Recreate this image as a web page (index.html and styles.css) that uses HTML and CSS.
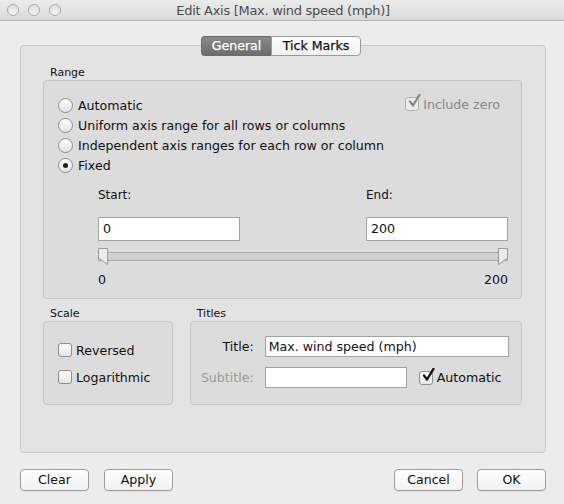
FILE: index.html
```html
<!DOCTYPE html>
<html>
<head>
<meta charset="utf-8">
<link rel="stylesheet" href="styles.css">
</head>
<body>
<div class="window">
  <div class="titlebar">
    <div class="lights"><span class="light"></span><span class="light"></span><span class="light"></span></div>
    <div class="wtitle">Edit Axis [Max. wind speed (mph)]</div>
  </div>
  <div class="body">
    <div class="tabbox">
      <div class="tabs"><span class="tab sel">General</span><span class="tab">Tick Marks</span></div>
      <div class="tabcontent">
        <div class="grouplabel">Range</div>
        <div class="group range">
          <div class="rangetop">
            <div class="radios">
              <div class="radiorow"><span class="radio"></span><span>Automatic</span></div>
              <div class="radiorow"><span class="radio"></span><span>Uniform axis range for all rows or columns</span></div>
              <div class="radiorow"><span class="radio"></span><span>Independent axis ranges for each row or column</span></div>
              <div class="radiorow"><span class="radio on"></span><span>Fixed</span></div>
            </div>
            <div class="checkrow disabled">
              <span class="cbox"><svg class="tick" viewBox="0 0 14 15" width="14" height="15"><path d="M3 7.5 L6 11.5 L12.5 0.8" fill="none" stroke="#8a8a8a" stroke-width="2.3" stroke-linecap="round" stroke-linejoin="round"/></svg></span>
              <span>Include zero</span>
            </div>
          </div>
          <div class="fields">
            <div class="field"><div class="flabel">Start:</div><div class="input">0</div></div>
            <div class="field"><div class="flabel">End:</div><div class="input">200</div></div>
          </div>
          <div class="slider">
            <div class="track"></div>
            <svg class="thumb left" viewBox="0 0 10 17" width="10" height="17"><path d="M0.5 0.5 H9.5 V16.5 L0.5 10 Z" fill="#ececec" stroke="#9a9a9a"/></svg>
            <svg class="thumb right" viewBox="0 0 10 17" width="10" height="17"><path d="M0.5 0.5 H9.5 V10 L0.5 16.5 Z" fill="#ececec" stroke="#9a9a9a"/></svg>
          </div>
          <div class="ticks"><span>0</span><span>200</span></div>
        </div>
        <div class="lowrow">
          <div class="scalecol">
            <div class="grouplabel">Scale</div>
            <div class="group scale">
              <div class="checkrow"><span class="cbox"></span><span>Reversed</span></div>
              <div class="checkrow"><span class="cbox"></span><span>Logarithmic</span></div>
            </div>
          </div>
          <div class="titlescol">
            <div class="grouplabel">Titles</div>
            <div class="group titles">
              <div class="trow"><span class="tlabel">Title:</span><div class="input wide">Max. wind speed (mph)</div></div>
              <div class="trow"><span class="tlabel dim">Subtitle:</span><div class="input mid"></div>
                <div class="checkrow auto"><span class="cbox"><svg class="tick" viewBox="0 0 14 15" width="14" height="15"><path d="M3 7.5 L6 11.5 L12.5 0.8" fill="none" stroke="#111" stroke-width="2.3" stroke-linecap="round" stroke-linejoin="round"/></svg></span><span>Automatic</span></div>
              </div>
            </div>
          </div>
        </div>
      </div>
    </div>
    <div class="buttons">
      <div class="bgroup"><span class="btn">Clear</span><span class="btn">Apply</span></div>
      <div class="bgroup right"><span class="btn">Cancel</span><span class="btn">OK</span></div>
    </div>
  </div>
</div>
</body>
</html>
```

FILE: styles.css
```css
* { box-sizing: border-box; }
html, body { margin: 0; padding: 0; }
body {
  width: 564px;
  height: 504px;
  background: #ececec;
  font-family: "DejaVu Sans", "Noto Sans", sans-serif;
  font-size: 12.6px;
  color: #111;
  overflow: hidden;
}
.window { width: 564px; height: 504px; background: #ececec; }
.titlebar {
  height: 21px;
  border-bottom: 1px solid #b4b4b4;
  background: linear-gradient(#ececec, #dadada);
  display: flex;
  align-items: center;
  padding-left: 7px;
}
.lights { display: flex; gap: 9px; width: 150px; }
.light {
  width: 12px; height: 12px; border-radius: 50%;
  border: 1px solid #a9a9a9;
  background: linear-gradient(#e0e0e0, #f4f4f4);
}
.wtitle {
  flex: none;
  width: 260px;
  text-align: center;
  margin-left: -4px;
  font-size: 13px;
  color: #4c4c4c;
  letter-spacing: -0.3px;
}
.body { padding: 24px 18px 0 20px; }
.tabbox {
  height: 408px;
  border: 1px solid #c8c8c8;
  border-radius: 4px;
  background: #e3e3e3;
  padding: 0 23px 0 22px;
}
.tabs {
  display: flex;
  justify-content: center;
  margin: -10px 0 0 0;
  padding-right: 3px;
  height: 20px;
}
.tab {
  height: 20px;
  line-height: 18px;
  font-size: 12.6px;
  border: 1px solid #9a9a9a;
  background: linear-gradient(#ffffff, #f0f0f0);
  text-align: center;
  color: #111;
  -webkit-text-stroke: 0.25px #111;
}
.tab.sel {
  width: 70px;
  background: linear-gradient(#8a8a8a, #6d6d6d);
  color: #fff;
  -webkit-text-stroke: 0.25px #fff;
  border-color: #6a6a6a;
  border-radius: 4px 0 0 4px;
  border-right: none;
}
.tab:not(.sel) { width: 90px; border-radius: 0 4px 4px 0; }
.grouplabel {
  font-size: 11px;
  line-height: 13px;
  height: 13px;
  margin: 10px 0 1px 7px;
  color: #111;
}
.group {
  border: 1px solid #c6c6c6;
  border-radius: 4px;
  background: #dcdcdc;
}
.range { height: 219px; padding: 14px 21px 0 14px; }
.rangetop { display: flex; justify-content: space-between; }
.radiorow { height: 20px; display: flex; align-items: center; gap: 5px; }
.radio {
  width: 15px; height: 15px; border-radius: 50%;
  border: 1px solid #8f8f8f;
  background: linear-gradient(#fdfdfd, #e4e4e4);
  display: flex; align-items: center; justify-content: center;
}
.radio.on::after {
  content: ""; width: 5px; height: 5px; border-radius: 50%; background: #222;
}
.checkrow { display: flex; align-items: center; gap: 4px; height: 20px; }
.checkrow.disabled { color: #888; height: 18px; }
.cbox {
  position: relative;
  flex: none;
  width: 14px; height: 14px; border-radius: 3px;
  border: 1px solid #8f8f8f;
  background: linear-gradient(#fdfdfd, #e6e6e6);
}
.disabled .cbox { border-color: #b0b0b0; background: #ececec; }
.tick { position: absolute; left: 1px; top: -4px; }
.fields {
  display: flex;
  justify-content: space-between;
  margin: 13px 0 0 40px;
  width: 410px;
}
.flabel { line-height: 15px; height: 15px; margin-bottom: 14px; font-size: 12px; }
.input {
  width: 142px; height: 24px;
  border: 1px solid #a3a3a3;
  background: #fff;
  padding: 0 4px;
  line-height: 22px;
  font-size: 12.6px;
}
.slider { position: relative; margin: 7px 0 0 40px; width: 410px; height: 17px; }
.track {
  position: absolute; left: 0; right: 0; top: 4px; height: 9px;
  border: 1px solid #a9a9a9; background: #d0d0d0;
}
.thumb { position: absolute; top: 0; }
.thumb.left { left: 0; }
.thumb.right { right: 0; }
.ticks {
  display: flex; justify-content: space-between;
  margin: 7px 0 0 40px; width: 410px; line-height: 15px;
}
.lowrow { display: flex; gap: 17px; margin-top: -2px; }
.scalecol { width: 130px; }
.titlescol { width: 333px; }
.scale { height: 84px; padding: 18px 0 0 14px; display: flex; flex-direction: column; gap: 7px; }
.titles { height: 84px; padding: 14px 0 0 0; }
.trow { display: flex; align-items: center; height: 21px; margin-bottom: 10px; }
.tlabel { width: 63px; text-align: right; margin-right: 11px; }
.tlabel.dim { color: #9a9a9a; }
.input.wide { width: 244px; height: 21px; line-height: 19px; padding-left: 3px; }
.input.mid { width: 142px; height: 21px; }
.auto { margin-left: 12px; }
.buttons { display: flex; justify-content: space-between; margin-top: 16px; }
.bgroup { display: flex; gap: 15px; }
.bgroup.right { gap: 14px; }
.btn {
  width: 69px; height: 22px;
  border: 1px solid #9c9c9c;
  border-radius: 4px;
  background: linear-gradient(#ffffff, #f1f1f1);
  text-align: center;
  line-height: 20px;
  font-size: 12.6px;
  box-shadow: 0 1px 0 rgba(0,0,0,0.05);
}
```
